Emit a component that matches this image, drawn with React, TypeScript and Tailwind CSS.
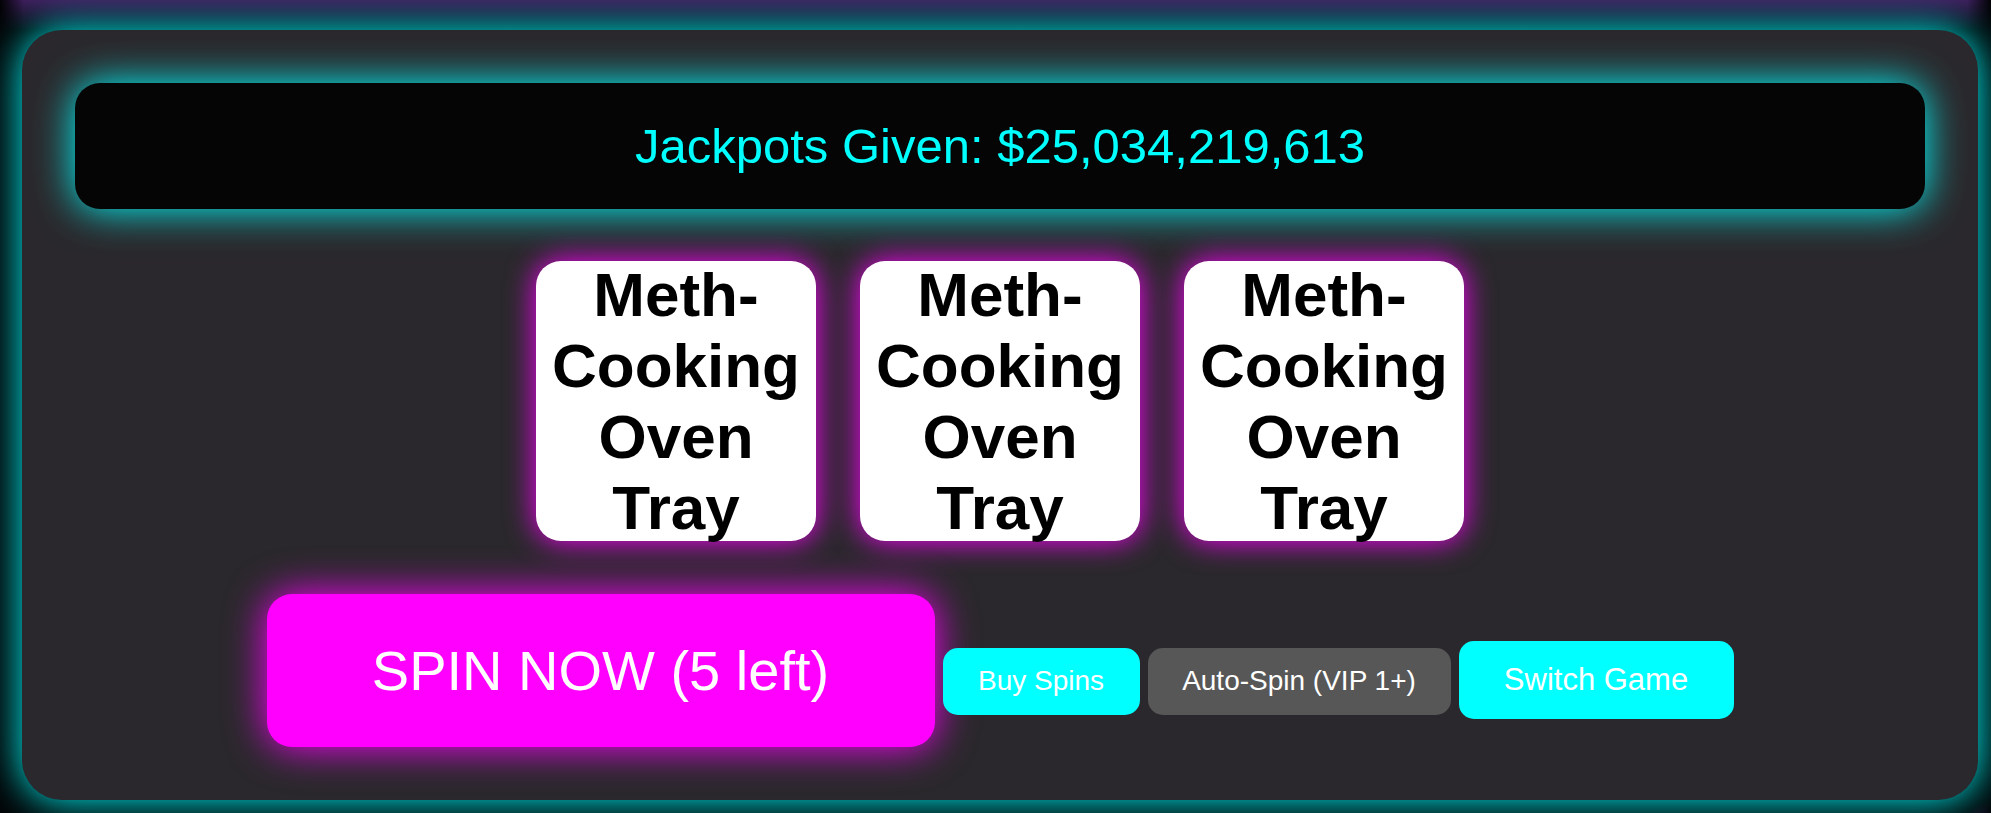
const reels = ['Meth-Cooking Oven Tray', 'Meth-Cooking Oven Tray', 'Meth-Cooking Oven Tray'];

const Reel: React.FC<{ label: string }> = ({ label }) => {
  return (
    <div className="flex h-[280px] w-[280px] items-center justify-center rounded-[25px] bg-white text-center text-[62px] leading-[normal] font-bold text-black shadow-[0_0_30px_#ff00ff]">
      {label}
    </div>
  );
};

export default function App() {
  return (
    <div className="min-h-screen w-full bg-[#030305] bg-[linear-gradient(to_right,#030305,transparent_24px,transparent_calc(100%-24px),#030305),radial-gradient(circle_at_100%_100%,#5c1c80,transparent_28px),linear-gradient(to_bottom,#3e1c5a,transparent_30px)] pt-[30px] pb-[30px] font-['Liberation_Sans',Arial,sans-serif]">
      <div className="ml-[22px] flex w-[1956px] flex-col rounded-[40px] bg-[#2a282c] px-[53px] py-[53px] shadow-[0_0_40px_#00ffff]">
        <div className="flex h-[126px] items-center justify-center rounded-[25px] bg-[#050505] text-[49px] leading-[normal] text-[#00ffff] shadow-[0_0_40px_#00ffff]">
          Jackpots Given: $25,034,219,613
        </div>

        <div className="mt-[52px] flex justify-center gap-[44px]">
          {reels.map((r, i) => (
            <Reel key={i} label={r} />
          ))}
        </div>

        <div className="mt-[53px] flex items-baseline justify-center gap-2">
          <button className="inline-flex h-[153px] w-[668px] items-center justify-center rounded-[25px] bg-[#ff00ff] text-[56px] leading-[normal] text-white shadow-[0_0_40px_#ff00ff]">
            SPIN NOW (5 left)
          </button>
          <button className="inline-flex h-[67px] w-[197px] items-center justify-center rounded-[15px] bg-[#00ffff] text-[28px] leading-[normal] text-white">
            Buy Spins
          </button>
          <button className="inline-flex h-[67px] w-[303px] items-center justify-center rounded-[15px] bg-[#575757] text-[28px] leading-[normal] text-white">
            Auto-Spin (VIP 1+)
          </button>
          <button className="inline-flex h-[78px] w-[275px] items-center justify-center rounded-[15px] bg-[#00ffff] text-[31px] leading-[normal] text-white">
            Switch Game
          </button>
        </div>
      </div>
    </div>
  );
}
